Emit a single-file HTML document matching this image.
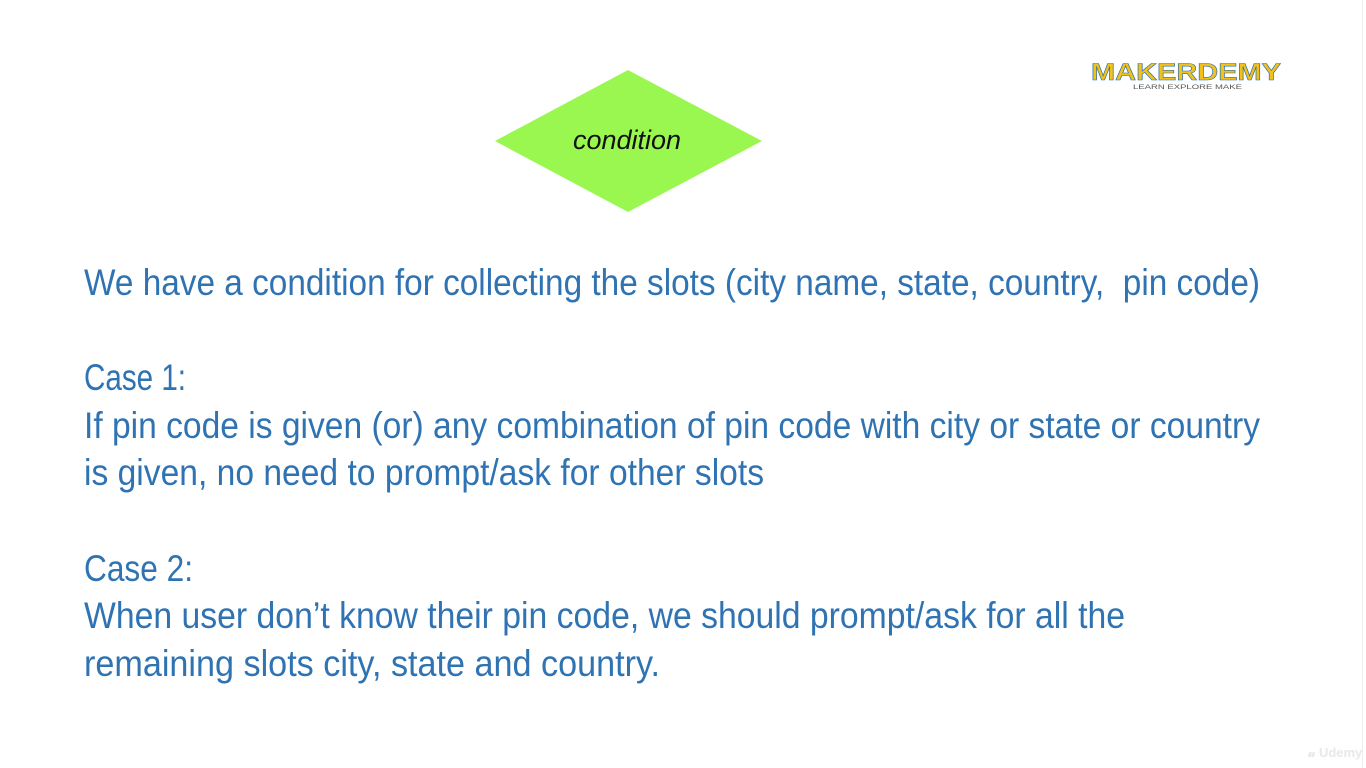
<!DOCTYPE html>
<html><head><style>
html,body{margin:0;padding:0;background:#fff;width:1366px;height:768px;overflow:hidden}
</style></head><body>
<svg width="1366" height="768" xmlns="http://www.w3.org/2000/svg" style="display:block">
<rect width="1366" height="768" fill="#fff"/>
<line x1="1362.5" y1="0" x2="1362.5" y2="768" stroke="#eee" stroke-width="1"/>
<polygon points="628,70 762,141 628,212 495,141" fill="#9af74f"/>
<text x="627" y="149" font-family="Liberation Sans, sans-serif" font-style="italic" font-size="27" text-anchor="middle" fill="#111">condition</text>
<g font-family="Liberation Sans, sans-serif" font-size="37" fill="#2f73b3">
<text x="84" y="295" textLength="1176" lengthAdjust="spacingAndGlyphs">We have a condition for collecting the slots (city name, state, country,&#160; pin code)</text>
<text x="84" y="390" textLength="102" lengthAdjust="spacingAndGlyphs">Case 1:</text>
<text x="84" y="438" textLength="1176" lengthAdjust="spacingAndGlyphs">If pin code is given (or) any combination of pin code with city or state or country</text>
<text x="84" y="485" textLength="680" lengthAdjust="spacingAndGlyphs">is given, no need to prompt/ask for other slots</text>
<text x="84" y="581" textLength="109" lengthAdjust="spacingAndGlyphs">Case 2:</text>
<text x="84" y="628" textLength="1041" lengthAdjust="spacingAndGlyphs">When user don’t know their pin code, we should prompt/ask for all the</text>
<text x="84" y="676" textLength="576" lengthAdjust="spacingAndGlyphs">remaining slots city, state and country.</text>
</g>
<text x="1091" y="80" font-family="Liberation Sans, sans-serif" font-weight="bold" font-size="24" fill="#f2c21b" stroke="#2a6fb0" stroke-width="0.6" textLength="190" lengthAdjust="spacingAndGlyphs">MAKERDEMY</text>
<text x="1133" y="89" font-family="Liberation Sans, sans-serif" font-size="6" fill="#555" textLength="109" lengthAdjust="spacingAndGlyphs">LEARN EXPLORE MAKE</text>
<text x="1308" y="757" font-family="Liberation Sans, sans-serif" font-weight="bold" font-size="13" fill="#e8e8e8">𝓊 Udemy</text>
</svg>
</body></html>
